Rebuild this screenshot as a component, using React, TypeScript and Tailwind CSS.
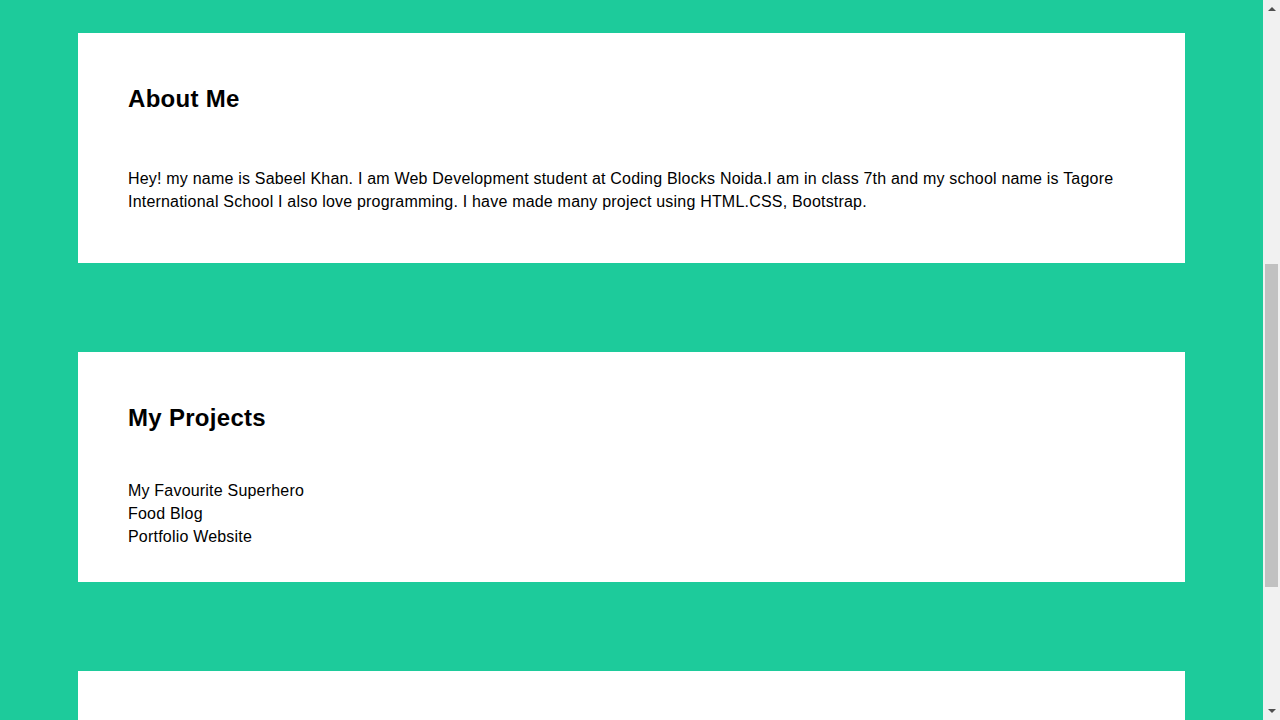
import { useLayoutEffect, useRef } from "react";

const PROJECTS = ["My Favourite Superhero", "Food Blog", "Portfolio Website"];

function Card({ title, children, className }: { title?: string; children?: React.ReactNode; className: string }) {
  return (
    <section className={`bg-white px-[50px] ${className}`}>
      {title ? <h2 className="text-[24px] font-bold leading-[28px] tracking-[0.3px] text-black">{title}</h2> : null}
      {children}
    </section>
  );
}

function Arrow({ up }: { up?: boolean }) {
  return (
    <div className="flex h-[17px] w-full items-center justify-center">
      <svg width="8" height="5" viewBox="0 0 8 5">
        <path d={up ? "M0 5 L4 1 L8 5 Z" : "M0 0 L4 4 L8 0 Z"} fill="#505050" />
      </svg>
    </div>
  );
}

function Scrollbar() {
  return (
    <div className="flex h-screen w-[17px] shrink-0 flex-col bg-[#f1f1f1]">
      <Arrow up />
      <div className="flex-1 px-[2px] pt-[247px]">
        <div className="h-[323px] bg-[#c1c1c1]" />
      </div>
      <Arrow />
    </div>
  );
}

export default function App() {
  const scroller = useRef<HTMLDivElement>(null);

  useLayoutEffect(() => {
    if (scroller.current) scroller.current.scrollTop = 551;
  }, []);

  return (
    <div
      className="flex h-screen text-black"
      style={{ fontFamily: '"Comic Sans MS", "Liberation Sans", sans-serif' }}
    >
      <div ref={scroller} className="h-screen flex-1 overflow-hidden bg-[#1dcb9b]">
        <div className="flex flex-col gap-[89px] px-[78px] pt-[584px] pb-[81px]">
          <Card title="About Me" className="h-[230px] pt-[52px]">
            <p className="mt-[54px] text-[16px] leading-[23px] tracking-[0.2px]">
              Hey! my name is Sabeel Khan. I am Web Development student at Coding Blocks Noida.I am in class 7th and
              my school name is Tagore International School I also love programming. I have made many project using
              HTML.CSS, Bootstrap.
            </p>
          </Card>

          <Card title="My Projects" className="h-[230px] pt-[52px]">
            <ul className="mt-[47px] text-[16px] leading-[23px] tracking-[0.2px]">
              {PROJECTS.map((p) => (
                <li key={p}>{p}</li>
              ))}
            </ul>
          </Card>

          <Card className="h-[230px]" />
        </div>
      </div>
      <Scrollbar />
    </div>
  );
}
